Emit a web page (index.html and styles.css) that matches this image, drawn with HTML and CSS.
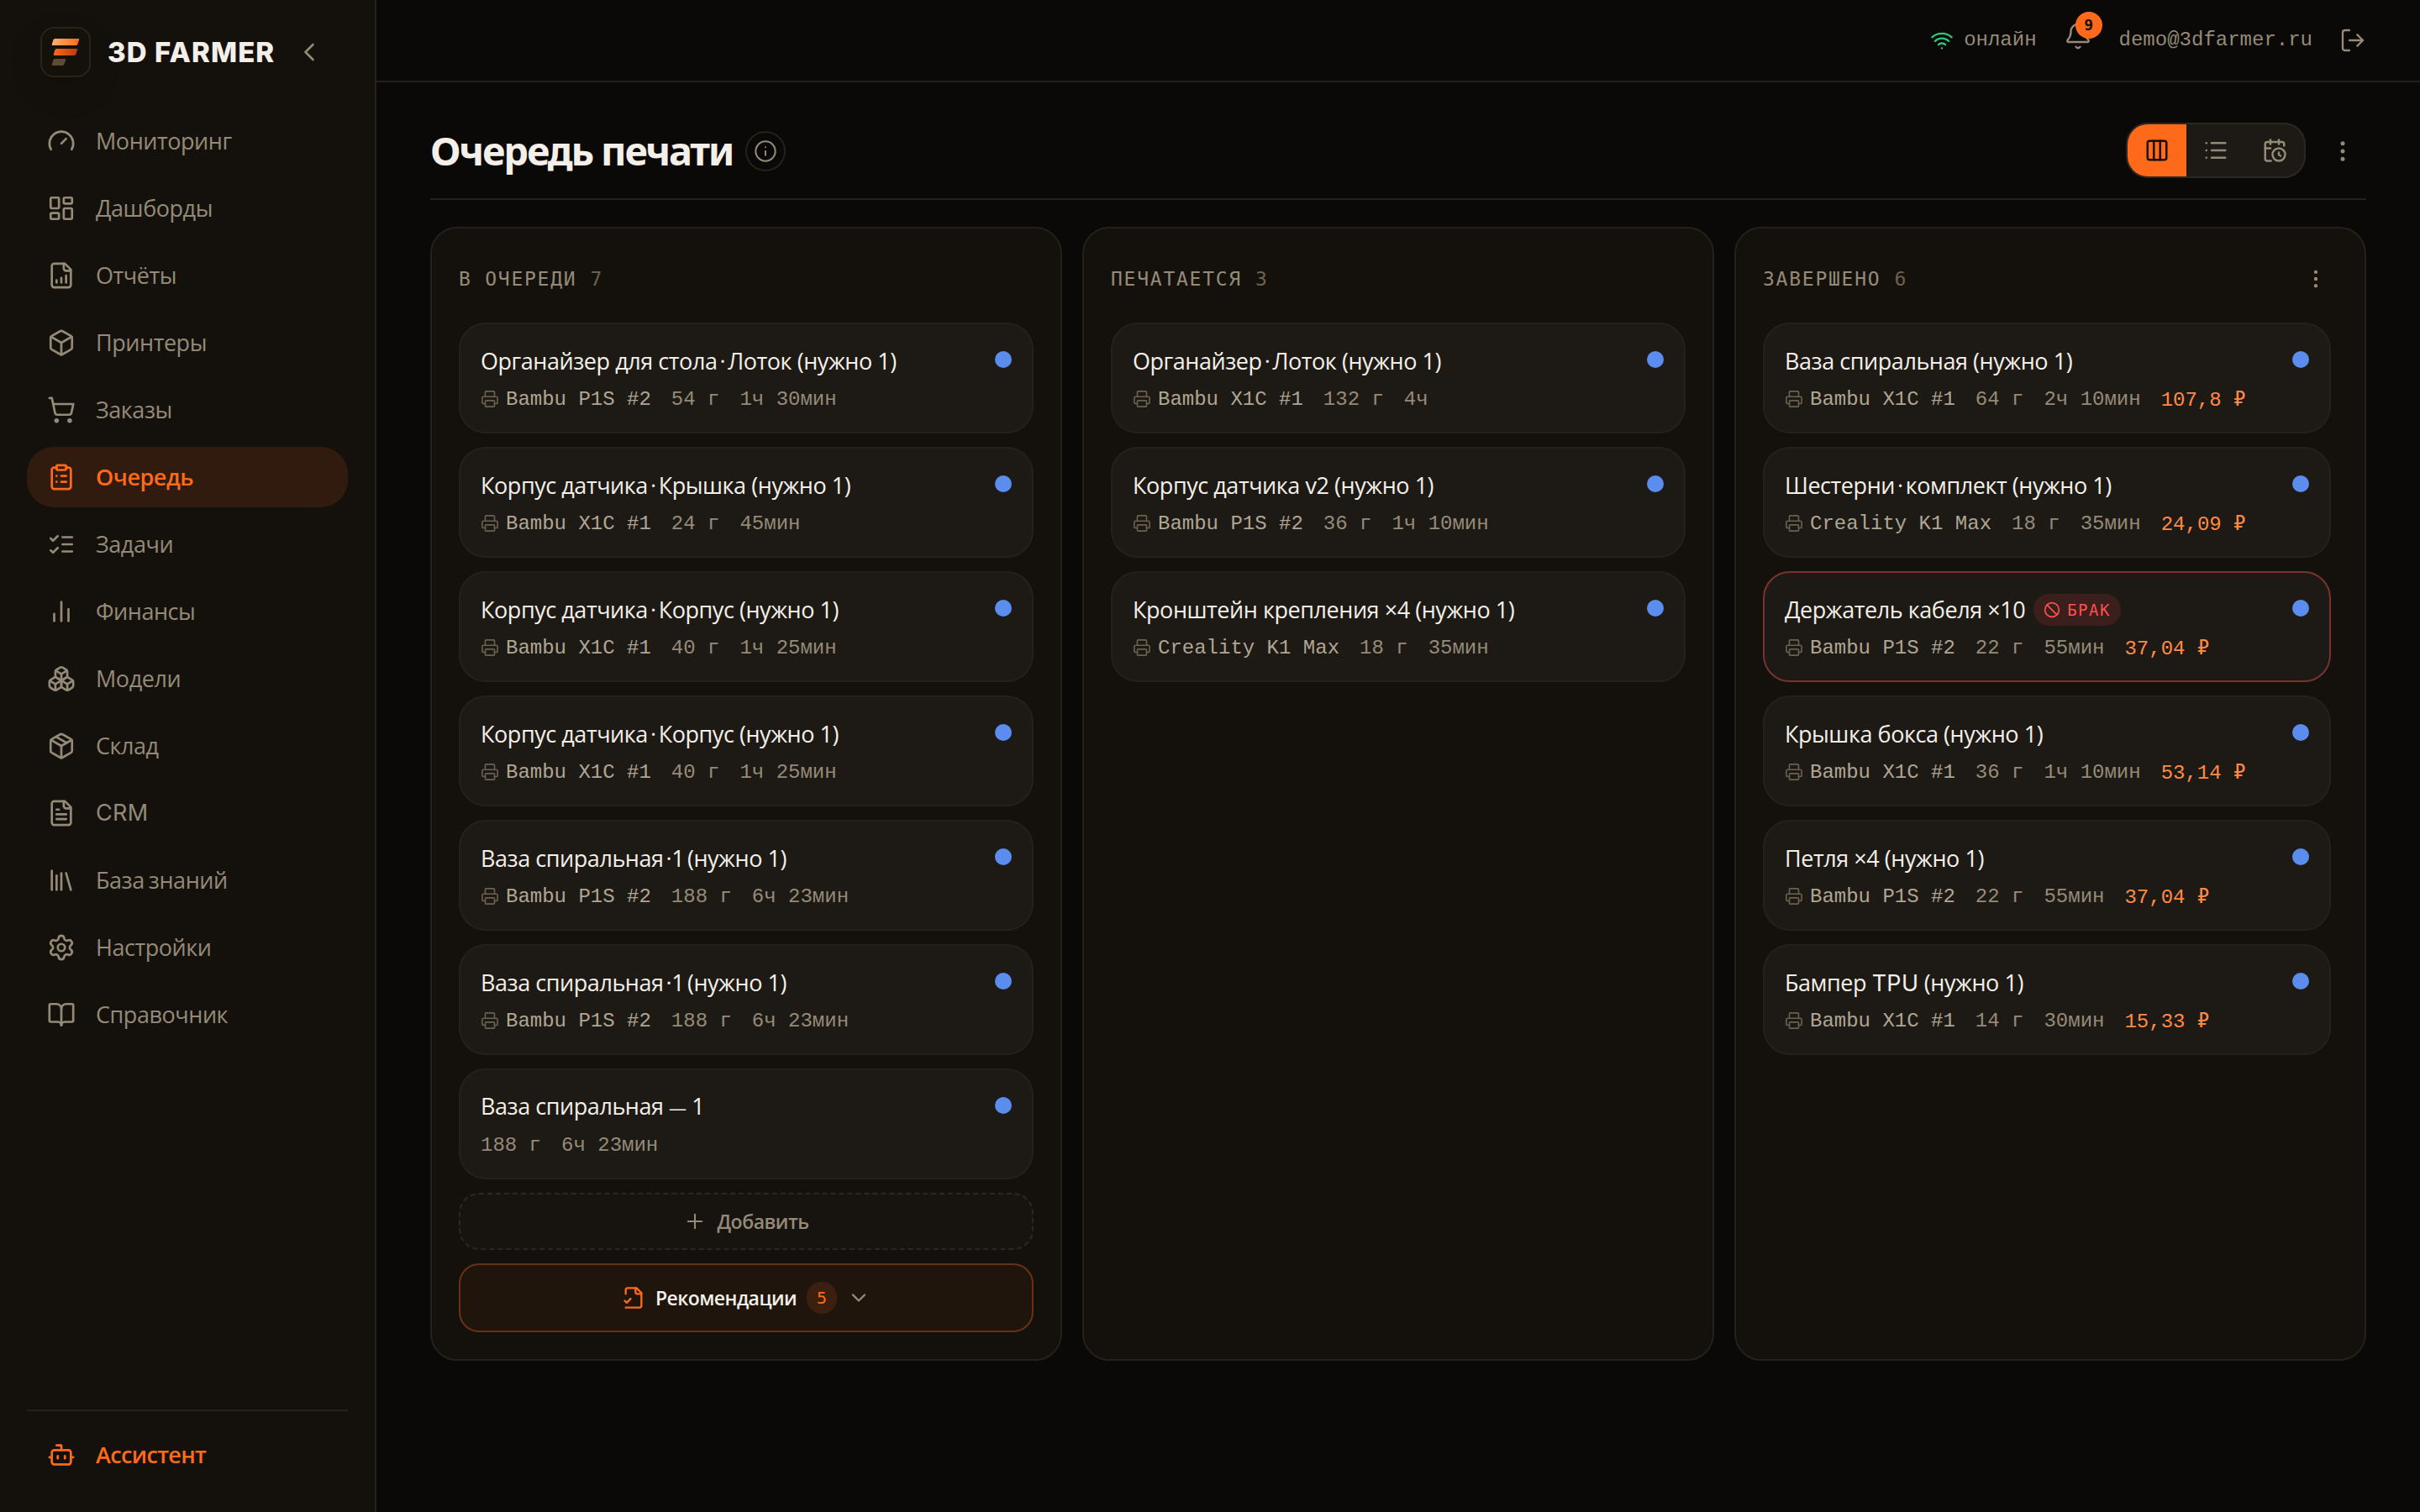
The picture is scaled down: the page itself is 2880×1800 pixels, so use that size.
FILE: index.html
```html
<!DOCTYPE html>
<html lang="ru">
<head>
  <meta charset="UTF-8">
  <title>3D FARMER — Очередь печати</title>
  <link rel="stylesheet" href="styles.css">
</head>
<body>

<!-- иконки -->
<svg class="sprite" xmlns="http://www.w3.org/2000/svg">
  <symbol id="i-left" viewBox="0 0 24 24"><path d="m15 18-6-6 6-6"/></symbol>
  <symbol id="i-down" viewBox="0 0 24 24"><path d="m6 9 6 6 6-6"/></symbol>
  <symbol id="i-gauge" viewBox="0 0 24 24"><path d="m12 14 4-4"/><path d="M3.34 19a10 10 0 1 1 17.32 0"/></symbol>
  <symbol id="i-dash" viewBox="0 0 24 24"><rect width="7" height="9" x="3" y="3" rx="1"/><rect width="7" height="5" x="14" y="3" rx="1"/><rect width="7" height="9" x="14" y="12" rx="1"/><rect width="7" height="5" x="3" y="16" rx="1"/></symbol>
  <symbol id="i-report" viewBox="0 0 24 24"><path d="M15 2H6a2 2 0 0 0-2 2v16a2 2 0 0 0 2 2h12a2 2 0 0 0 2-2V7Z"/><path d="M14 2v4a2 2 0 0 0 2 2h4"/><path d="M8 18v-2"/><path d="M12 18v-4"/><path d="M16 18v-6"/></symbol>
  <symbol id="i-box" viewBox="0 0 24 24"><path d="M21 8a2 2 0 0 0-1-1.73l-7-4a2 2 0 0 0-2 0l-7 4A2 2 0 0 0 3 8v8a2 2 0 0 0 1 1.73l7 4a2 2 0 0 0 2 0l7-4A2 2 0 0 0 21 16Z"/><path d="m3.3 7 8.7 5 8.7-5"/><path d="M12 22V12"/></symbol>
  <symbol id="i-cart" viewBox="0 0 24 24"><circle cx="8" cy="21" r="1"/><circle cx="19" cy="21" r="1"/><path d="M2.05 2.05h2l2.66 12.42a2 2 0 0 0 2 1.58h9.78a2 2 0 0 0 1.95-1.57l1.65-7.43H5.12"/></symbol>
  <symbol id="i-queue" viewBox="0 0 24 24"><rect width="8" height="4" x="8" y="2" rx="1"/><path d="M16 4h2a2 2 0 0 1 2 2v14a2 2 0 0 1-2 2H6a2 2 0 0 1-2-2V6a2 2 0 0 1 2-2h2"/><path d="M12 11h4"/><path d="M12 16h4"/><path d="M8 11h.01"/><path d="M8 16h.01"/></symbol>
  <symbol id="i-tasks" viewBox="0 0 24 24"><path d="m3 17 2 2 4-4"/><path d="m3 7 2 2 4-4"/><path d="M13 6h8"/><path d="M13 12h8"/><path d="M13 18h8"/></symbol>
  <symbol id="i-chart" viewBox="0 0 24 24"><path d="M18 20V10"/><path d="M12 20V4"/><path d="M6 20v-6"/></symbol>
  <symbol id="i-boxes" viewBox="0 0 24 24"><path d="M2.97 12.92A2 2 0 0 0 2 14.63v3.24a2 2 0 0 0 .97 1.71l3 1.8a2 2 0 0 0 2.06 0L12 19v-5.5l-5-3-4.03 2.42Z"/><path d="m7 16.5-4.74-2.85"/><path d="m7 16.5 5-3"/><path d="M7 16.5v5.17"/><path d="M12 13.5V19l3.97 2.38a2 2 0 0 0 2.06 0l3-1.8a2 2 0 0 0 .97-1.71v-3.24a2 2 0 0 0-.97-1.71L17 10.5l-5 3Z"/><path d="m17 16.5-5-3"/><path d="m17 16.5 4.74-2.85"/><path d="M17 16.5v5.17"/><path d="M7.97 4.42A2 2 0 0 0 7 6.13v4.37l5 3 5-3V6.13a2 2 0 0 0-.97-1.71l-3-1.8a2 2 0 0 0-2.06 0l-3 1.8Z"/><path d="M12 8 7.26 5.15"/><path d="m12 8 4.74-2.85"/><path d="M12 13.5V8"/></symbol>
  <symbol id="i-package" viewBox="0 0 24 24"><path d="M11 21.73a2 2 0 0 0 2 0l7-4A2 2 0 0 0 21 16V8a2 2 0 0 0-1-1.73l-7-4a2 2 0 0 0-2 0l-7 4A2 2 0 0 0 3 8v8a2 2 0 0 0 1 1.73z"/><path d="M12 22V12"/><path d="m3.3 7 8.7 5 8.7-5"/><path d="m7.5 4.27 9 5.15"/></symbol>
  <symbol id="i-file" viewBox="0 0 24 24"><path d="M15 2H6a2 2 0 0 0-2 2v16a2 2 0 0 0 2 2h12a2 2 0 0 0 2-2V7Z"/><path d="M14 2v4a2 2 0 0 0 2 2h4"/><path d="M10 9H8"/><path d="M16 13H8"/><path d="M16 17H8"/></symbol>
  <symbol id="i-library" viewBox="0 0 24 24"><path d="m16 6 4 14"/><path d="M12 6v14"/><path d="M8 8v12"/><path d="M4 4v16"/></symbol>
  <symbol id="i-settings" viewBox="0 0 24 24"><path d="M9.671 4.136a2.34 2.34 0 0 1 4.659 0 2.34 2.34 0 0 0 3.319 1.915 2.34 2.34 0 0 1 2.33 4.033 2.34 2.34 0 0 0 0 3.831 2.34 2.34 0 0 1-2.33 4.033 2.34 2.34 0 0 0-3.319 1.915 2.34 2.34 0 0 1-4.659 0 2.34 2.34 0 0 0-3.32-1.915 2.34 2.34 0 0 1-2.33-4.033 2.34 2.34 0 0 0 0-3.831A2.34 2.34 0 0 1 6.35 6.051a2.34 2.34 0 0 0 3.319-1.915"/><circle cx="12" cy="12" r="3"/></symbol>
  <symbol id="i-book" viewBox="0 0 24 24"><path d="M12 7v14"/><path d="M3 18a1 1 0 0 1-1-1V4a1 1 0 0 1 1-1h5a4 4 0 0 1 4 4 4 4 0 0 1 4-4h5a1 1 0 0 1 1 1v13a1 1 0 0 1-1 1h-6a3 3 0 0 0-3 3 3 3 0 0 0-3-3z"/></symbol>
  <symbol id="i-bot" viewBox="0 0 24 24"><path d="M12 8V4H8"/><rect width="16" height="12" x="4" y="8" rx="2"/><path d="M2 14h2"/><path d="M20 14h2"/><path d="M15 13v2"/><path d="M9 13v2"/></symbol>
  <symbol id="i-wifi" viewBox="0 0 24 24"><path d="M12 20h.01"/><path d="M2 8.82a15 15 0 0 1 20 0"/><path d="M5 12.859a10 10 0 0 1 14 0"/><path d="M8.5 16.429a5 5 0 0 1 7 0"/></symbol>
  <symbol id="i-bell" viewBox="0 0 24 24"><path d="M10.268 21a2 2 0 0 0 3.464 0"/><path d="M3.262 15.326A1 1 0 0 0 4 17h16a1 1 0 0 0 .74-1.673C19.41 13.956 18 12.499 18 8A6 6 0 0 0 6 8c0 4.499-1.411 5.956-2.738 7.326"/></symbol>
  <symbol id="i-logout" viewBox="0 0 24 24"><path d="m16 17 5-5-5-5"/><path d="M21 12H9"/><path d="M9 21H5a2 2 0 0 1-2-2V5a2 2 0 0 1 2-2h4"/></symbol>
  <symbol id="i-info" viewBox="0 0 24 24"><circle cx="12" cy="12" r="10"/><path d="M12 16v-4"/><path d="M12 8h.01"/></symbol>
  <symbol id="i-columns" viewBox="0 0 24 24"><rect width="18" height="18" x="3" y="3" rx="2"/><path d="M9 3v18"/><path d="M15 3v18"/></symbol>
  <symbol id="i-list" viewBox="0 0 24 24"><path d="M3 5h.01"/><path d="M3 12h.01"/><path d="M3 19h.01"/><path d="M8 5h13"/><path d="M8 12h13"/><path d="M8 19h13"/></symbol>
  <symbol id="i-calendar" viewBox="0 0 24 24"><path d="M16 14v2.2l1.6 1"/><path d="M16 2v4"/><path d="M21 7.5V6a2 2 0 0 0-2-2H5a2 2 0 0 0-2 2v14a2 2 0 0 0 2 2h3.5"/><path d="M3 10h5"/><path d="M8 2v4"/><circle cx="16" cy="16" r="6"/></symbol>
  <symbol id="i-more" viewBox="0 0 24 24"><circle cx="12" cy="12" r="1"/><circle cx="12" cy="5" r="1"/><circle cx="12" cy="19" r="1"/></symbol>
  <symbol id="i-printer" viewBox="0 0 24 24"><path d="M6 18H4a2 2 0 0 1-2-2v-5a2 2 0 0 1 2-2h16a2 2 0 0 1 2 2v5a2 2 0 0 1-2 2h-2"/><path d="M6 9V3a1 1 0 0 1 1-1h10a1 1 0 0 1 1 1v6"/><rect x="6" y="14" width="12" height="8" rx="1"/></symbol>
  <symbol id="i-ban" viewBox="0 0 24 24"><circle cx="12" cy="12" r="10"/><path d="m4.9 4.9 14.2 14.2"/></symbol>
  <symbol id="i-plus" viewBox="0 0 24 24"><path d="M5 12h14"/><path d="M12 5v14"/></symbol>
  <symbol id="i-filecheck" viewBox="0 0 24 24"><path d="M4 22h14a2 2 0 0 0 2-2V7l-5-5H6a2 2 0 0 0-2 2v4"/><path d="M14 2v4a2 2 0 0 0 2 2h4"/><path d="m3 15 2 2 4-4"/></symbol>
</svg>

<div class="app">
  <aside class="sidebar">
    <div class="brand">
      <div class="logo">
        <svg viewBox="0 0 34 34">
          <defs>
            <linearGradient id="g1" x1="0" y1="0" x2="1" y2="0"><stop offset="0" stop-color="#ffb070"/><stop offset="1" stop-color="#ff6a1a"/></linearGradient>
            <linearGradient id="g2" x1="0" y1="0" x2="1" y2="0"><stop offset="0" stop-color="#ff6a1a"/><stop offset="1" stop-color="#b83c08"/></linearGradient>
          </defs>
          <path fill="url(#g1)" d="M4.4 1H32.4Q33.6 1 33.2 2.2L31.4 7.4Q30.8 9 29.2 9H1.6Q.4 9 .8 7.8L2.4 2.6Q3 1 4.4 1Z"/>
          <path fill="url(#g2)" d="M6.4 13H30.4Q31.6 13 31.2 14.2L29.4 19.4Q28.8 21 27.2 21H3.6Q2.4 21 2.8 19.8L4.4 14.6Q5 13 6.4 13Z"/>
          <path fill="#5f4a36" d="M4.4 25H16.4Q17.6 25 17.2 26.2L15.4 31.4Q14.8 33 13.2 33H1.6Q.4 33 .8 31.8L2.4 26.6Q3 25 4.4 25Z"/>
        </svg>
      </div>
      <span class="brand-name">3D FARMER</span>
      <svg class="icon collapse"><use href="#i-left"/></svg>
    </div>
    <nav class="nav">
      <a class="nav-item"><svg class="icon"><use href="#i-gauge"/></svg>Мониторинг</a>
      <a class="nav-item"><svg class="icon"><use href="#i-dash"/></svg>Дашборды</a>
      <a class="nav-item"><svg class="icon"><use href="#i-report"/></svg>Отчёты</a>
      <a class="nav-item"><svg class="icon"><use href="#i-box"/></svg>Принтеры</a>
      <a class="nav-item"><svg class="icon"><use href="#i-cart"/></svg>Заказы</a>
      <a class="nav-item active"><svg class="icon"><use href="#i-queue"/></svg>Очередь</a>
      <a class="nav-item"><svg class="icon"><use href="#i-tasks"/></svg>Задачи</a>
      <a class="nav-item"><svg class="icon"><use href="#i-chart"/></svg>Финансы</a>
      <a class="nav-item"><svg class="icon"><use href="#i-boxes"/></svg>Модели</a>
      <a class="nav-item"><svg class="icon"><use href="#i-package"/></svg>Склад</a>
      <a class="nav-item"><svg class="icon"><use href="#i-file"/></svg><span class="latin">CRM</span></a>
      <a class="nav-item"><svg class="icon"><use href="#i-library"/></svg>База знаний</a>
      <a class="nav-item"><svg class="icon"><use href="#i-settings"/></svg>Настройки</a>
      <a class="nav-item"><svg class="icon"><use href="#i-book"/></svg>Справочник</a>
    </nav>
    <div class="sidebar-bottom">
      <a class="nav-item assistant"><svg class="icon"><use href="#i-bot"/></svg>Ассистент</a>
    </div>
  </aside>

  <div class="content">
    <header class="topbar">
      <span class="status"><svg class="icon"><use href="#i-wifi"/></svg>онлайн</span>
      <span class="bell"><svg class="icon"><use href="#i-bell"/></svg><span class="bell-count">9</span></span>
      <span>demo@3dfarmer.ru</span>
      <svg class="icon logout"><use href="#i-logout"/></svg>
    </header>

    <main class="main">
      <div class="page-head">
        <h1>Очередь печати</h1>
        <button class="info"><svg class="icon"><use href="#i-info"/></svg></button>
        <div class="views">
          <button class="view active"><svg class="icon"><use href="#i-columns"/></svg></button>
          <button class="view"><svg class="icon"><use href="#i-list"/></svg></button>
          <button class="view"><svg class="icon"><use href="#i-calendar"/></svg></button>
        </div>
        <button class="more"><svg class="icon"><use href="#i-more"/></svg></button>
      </div>

      <div class="board">
        <!-- В очереди -->
        <section class="column">
          <div class="column-head"><span>В ОЧЕРЕДИ</span><span class="count">7</span></div>
          <div class="cards">
            <div class="card">
              <div class="card-top"><span class="title">Органайзер для стола<span class="sep"> · </span>Лоток (нужно 1)</span><i class="dot"></i></div>
              <div class="meta"><span class="printer"><svg class="icon"><use href="#i-printer"/></svg>Bambu P1S #2</span><span>54 г</span><span>1ч 30мин</span></div>
            </div>
            <div class="card">
              <div class="card-top"><span class="title">Корпус датчика<span class="sep"> · </span>Крышка (нужно 1)</span><i class="dot"></i></div>
              <div class="meta"><span class="printer"><svg class="icon"><use href="#i-printer"/></svg>Bambu X1C #1</span><span>24 г</span><span>45мин</span></div>
            </div>
            <div class="card">
              <div class="card-top"><span class="title">Корпус датчика<span class="sep"> · </span>Корпус (нужно 1)</span><i class="dot"></i></div>
              <div class="meta"><span class="printer"><svg class="icon"><use href="#i-printer"/></svg>Bambu X1C #1</span><span>40 г</span><span>1ч 25мин</span></div>
            </div>
            <div class="card">
              <div class="card-top"><span class="title">Корпус датчика<span class="sep"> · </span>Корпус (нужно 1)</span><i class="dot"></i></div>
              <div class="meta"><span class="printer"><svg class="icon"><use href="#i-printer"/></svg>Bambu X1C #1</span><span>40 г</span><span>1ч 25мин</span></div>
            </div>
            <div class="card">
              <div class="card-top"><span class="title">Ваза спиральная<span class="sep"> · </span><span class="one">1</span> (нужно 1)</span><i class="dot"></i></div>
              <div class="meta"><span class="printer"><svg class="icon"><use href="#i-printer"/></svg>Bambu P1S #2</span><span>188 г</span><span>6ч 23мин</span></div>
            </div>
            <div class="card">
              <div class="card-top"><span class="title">Ваза спиральная<span class="sep"> · </span><span class="one">1</span> (нужно 1)</span><i class="dot"></i></div>
              <div class="meta"><span class="printer"><svg class="icon"><use href="#i-printer"/></svg>Bambu P1S #2</span><span>188 г</span><span>6ч 23мин</span></div>
            </div>
            <div class="card">
              <div class="card-top"><span class="title">Ваза спиральная <span class="dash">—</span> 1</span><i class="dot"></i></div>
              <div class="meta"><span>188 г</span><span>6ч 23мин</span></div>
            </div>
            <button class="add"><svg class="icon"><use href="#i-plus"/></svg>Добавить</button>
            <button class="recs"><svg class="icon"><use href="#i-filecheck"/></svg>Рекомендации<span class="recs-count">5</span><svg class="icon chevron"><use href="#i-down"/></svg></button>
          </div>
        </section>

        <!-- Печатается -->
        <section class="column">
          <div class="column-head"><span>ПЕЧАТАЕТСЯ</span><span class="count">3</span></div>
          <div class="cards">
            <div class="card">
              <div class="card-top"><span class="title">Органайзер<span class="sep"> · </span>Лоток (нужно 1)</span><i class="dot"></i></div>
              <div class="meta"><span class="printer"><svg class="icon"><use href="#i-printer"/></svg>Bambu X1C #1</span><span>132 г</span><span>4ч</span></div>
            </div>
            <div class="card">
              <div class="card-top"><span class="title">Корпус датчика v2 (нужно 1)</span><i class="dot"></i></div>
              <div class="meta"><span class="printer"><svg class="icon"><use href="#i-printer"/></svg>Bambu P1S #2</span><span>36 г</span><span>1ч 10мин</span></div>
            </div>
            <div class="card">
              <div class="card-top"><span class="title">Кронштейн крепления ×4 (нужно 1)</span><i class="dot"></i></div>
              <div class="meta"><span class="printer"><svg class="icon"><use href="#i-printer"/></svg>Creality K1 Max</span><span>18 г</span><span>35мин</span></div>
            </div>
          </div>
        </section>

        <!-- Завершено -->
        <section class="column">
          <div class="column-head"><span>ЗАВЕРШЕНО</span><span class="count">6</span><button class="more"><svg class="icon"><use href="#i-more"/></svg></button></div>
          <div class="cards scroll">
            <div class="card">
              <div class="card-top"><span class="title">Ваза спиральная (нужно 1)</span><i class="dot"></i></div>
              <div class="meta"><span class="printer"><svg class="icon"><use href="#i-printer"/></svg>Bambu X1C #1</span><span>64 г</span><span>2ч 10мин</span><span class="price">107,8 ₽</span></div>
            </div>
            <div class="card">
              <div class="card-top"><span class="title">Шестерни<span class="sep"> · </span>комплект (нужно 1)</span><i class="dot"></i></div>
              <div class="meta"><span class="printer"><svg class="icon"><use href="#i-printer"/></svg>Creality K1 Max</span><span>18 г</span><span>35мин</span><span class="price">24,09 ₽</span></div>
            </div>
            <div class="card defect">
              <div class="card-top"><span class="title">Держатель кабеля ×10</span><span class="badge"><svg class="icon"><use href="#i-ban"/></svg>БРАК</span><i class="dot"></i></div>
              <div class="meta"><span class="printer"><svg class="icon"><use href="#i-printer"/></svg>Bambu P1S #2</span><span>22 г</span><span>55мин</span><span class="price">37,04 ₽</span></div>
            </div>
            <div class="card">
              <div class="card-top"><span class="title">Крышка бокса (нужно 1)</span><i class="dot"></i></div>
              <div class="meta"><span class="printer"><svg class="icon"><use href="#i-printer"/></svg>Bambu X1C #1</span><span>36 г</span><span>1ч 10мин</span><span class="price">53,14 ₽</span></div>
            </div>
            <div class="card">
              <div class="card-top"><span class="title">Петля ×4 (нужно 1)</span><i class="dot"></i></div>
              <div class="meta"><span class="printer"><svg class="icon"><use href="#i-printer"/></svg>Bambu P1S #2</span><span>22 г</span><span>55мин</span><span class="price">37,04 ₽</span></div>
            </div>
            <div class="card">
              <div class="card-top"><span class="title">Бампер <span class="latin">TPU</span> (нужно 1)</span><i class="dot"></i></div>
              <div class="meta"><span class="printer"><svg class="icon"><use href="#i-printer"/></svg>Bambu X1C #1</span><span>14 г</span><span>30мин</span><span class="price">15,33 ₽</span></div>
            </div>
          </div>
        </section>
      </div>
    </main>
  </div>
</div>

</body>
</html>
```
FILE: styles.css
```css
* {
  box-sizing: border-box;
}
body {
  margin: 0;
  background: #0a0907;
  color: #f4efe8;
  font-family: "Open Sans", "Noto Sans", sans-serif;
  font-size: 27px;
}
button {
  padding: 0;
  border: 0;
  background: none;
  color: inherit;
  font: inherit;
}
.sprite {
  display: none;
}
.icon {
  flex: none;
  width: 28px;
  height: 28px;
  fill: none;
  stroke: currentColor;
  stroke-width: 1.75;
  stroke-linecap: round;
  stroke-linejoin: round;
}
.latin {
  font-family: Inter, sans-serif;
  letter-spacing: 0.3px;
}
.app {
  display: flex;
  height: 1800px;
}

/* sidebar */
.sidebar {
  display: flex;
  flex-direction: column;
  flex: none;
  width: 448px;
  padding: 32px;
  background: #14110c;
  border-right: 2px solid #25211c;
}
.brand {
  display: flex;
  align-items: center;
  padding: 0 28px 0 16px;
  margin-bottom: 40px;
}
.logo {
  display: flex;
  align-items: center;
  justify-content: center;
  width: 60px;
  height: 60px;
  border: 2px solid #2a2318;
  border-radius: 16px;
  background: #14110b;
  box-shadow: 0 16px 40px rgba(0, 0, 0, 0.12);
}
.logo svg {
  width: 34px;
  height: 34px;
}
.brand-name {
  margin-left: 20px;
  font-family: Inter, sans-serif;
  font-size: 33px;
  font-weight: 800;
  letter-spacing: 1.1px;
  line-height: 40px;
  white-space: nowrap;
}
.collapse {
  width: 36px;
  height: 36px;
  margin-left: auto;
  color: #958a78;
}
.nav {
  display: flex;
  flex-direction: column;
  gap: 8px;
}
.nav-item {
  display: flex;
  align-items: center;
  gap: 24px;
  height: 72px;
  padding: 0 24px;
  border-radius: 32px;
  color: #958a78;
  letter-spacing: -0.45px;
  word-spacing: -1.5px;
  line-height: 36px;
}
.nav-item .icon {
  width: 34px;
  height: 34px;
  stroke-width: 1.9;
}
.nav-item.active {
  background: #311b0f;
  color: #ff6a1a;
  font-weight: 600;
}
.assistant {
  color: #ff6a1a;
  font-weight: 600;
  letter-spacing: -0.65px;
}
.sidebar-bottom {
  margin-top: auto;
  padding-top: 16px;
  border-top: 2px solid #25211c;
}

/* top bar */
.content {
  flex: 1;
  min-width: 0;
}
.topbar {
  display: flex;
  align-items: center;
  justify-content: flex-end;
  gap: 32px;
  height: 98px;
  padding-right: 64px;
  border-bottom: 2px solid #25201a;
  color: #958a78;
  font-family: "Liberation Mono", monospace;
  font-size: 24px;
  line-height: 30px;
}
.status {
  display: flex;
  align-items: center;
  gap: 12px;
}
.status .icon {
  color: #2fc77c;
  stroke-width: 2;
}
.bell {
  position: relative;
  display: flex;
  margin-bottom: 10px;
}
.bell .icon {
  width: 34px;
  height: 34px;
}
.bell-count {
  position: absolute;
  top: -12px;
  right: -12px;
  width: 32px;
  height: 32px;
  border-radius: 50%;
  background: #ff6a1a;
  color: #14110c;
  font-family: "DejaVu Sans Mono", monospace;
  font-size: 18px;
  font-weight: 700;
  line-height: 32px;
  text-align: center;
}
.logout {
  width: 32px;
  height: 32px;
}

/* page */
.main {
  padding: 48px 64px 0;
}
.page-head {
  display: flex;
  align-items: center;
  padding-bottom: 24px;
  margin-bottom: 32px;
  border-bottom: 2px solid #25201a;
}
h1 {
  margin: 0;
  font-family: "Noto Sans", sans-serif;
  font-size: 47px;
  font-weight: 700;
  letter-spacing: -2.2px;
  line-height: 60px;
  white-space: nowrap;
}
.info {
  display: flex;
  align-items: center;
  justify-content: center;
  width: 48px;
  height: 48px;
  margin: 2px 0 0 15px;
  border: 2px solid #25201a;
  border-radius: 50%;
  color: #958a78;
}
.views {
  display: flex;
  margin-left: auto;
  overflow: hidden;
  border: 2px solid #2d2721;
  border-radius: 26px;
  background: #1d1a15;
}
.view {
  display: flex;
  align-items: center;
  justify-content: center;
  width: 70px;
  height: 62px;
  color: #958a78;
}
.view .icon {
  width: 30px;
  height: 30px;
  stroke-width: 2;
}
.view.active {
  background: #ff6a1a;
  color: #140f0a;
}
.more {
  display: flex;
  align-items: center;
  justify-content: center;
  width: 56px;
  height: 56px;
  color: #958a78;
}
.more .icon {
  fill: currentColor;
}
.page-head .more {
  margin: 2px 0 0 16px;
}
.page-head .more .icon {
  width: 32px;
  height: 32px;
}

/* board */
.board {
  display: grid;
  grid-template-columns: repeat(3, 1fr);
  gap: 24px;
}
.column {
  padding: 32px;
  border: 2px solid #25201a;
  border-radius: 32px;
  background: #14110c;
}
.column-head {
  display: flex;
  align-items: center;
  gap: 16px;
  height: 56px;
  margin-bottom: 24px;
  color: #958a78;
  font-family: "DejaVu Sans Mono", monospace;
  font-size: 23px;
}
.column-head span:first-child {
  letter-spacing: 1.75px;
}
.column-head .count {
  color: #6b6150;
}
.column-head .more {
  margin: 0 -2px 0 auto;
}
.cards {
  display: flex;
  flex-direction: column;
  gap: 16px;
}
.cards.scroll {
  padding-right: 8px;
}
.card {
  height: 132px;
  padding: 24px;
  border: 2px solid #24201b;
  border-radius: 32px;
  background: #1d1a15;
}
.card.defect {
  border-color: #7a3230;
}
.card-top {
  display: flex;
  align-items: center;
  height: 40px;
  margin-bottom: 10px;
}
.title {
  line-height: 40px;
  letter-spacing: -0.45px;
  word-spacing: 0;
  white-space: nowrap;
}
.sep {
  word-spacing: -3.5px;
}
.one {
  margin: 0 -3px;
}
.dash {
  font-size: 21px;
}
.dot {
  align-self: flex-start;
  width: 20px;
  height: 20px;
  margin: 8px 0 0 auto;
  border-radius: 50%;
  background: #5b8def;
}
.badge {
  display: flex;
  align-items: center;
  gap: 8px;
  height: 38px;
  margin-left: 10px;
  padding: 0 12px;
  border-radius: 19px;
  background: #3a1f1c;
  color: #ff5050;
  font-family: "DejaVu Sans Mono", monospace;
  font-size: 19px;
  letter-spacing: 1.5px;
}
.badge .icon {
  width: 20px;
  height: 20px;
  stroke-width: 2;
}
.meta {
  display: flex;
  align-items: center;
  gap: 24px;
  height: 30px;
  color: #958a78;
  font-family: "Liberation Mono", monospace;
  font-size: 24px;
  white-space: nowrap;
}
.printer {
  display: flex;
  align-items: center;
  gap: 8px;
  color: #b0a593;
}
.printer .icon {
  width: 22px;
  height: 22px;
  color: #6b6150;
}
.price {
  color: #ff8a45;
}
.add,
.recs {
  display: flex;
  align-items: center;
  justify-content: center;
  gap: 12px;
  border-radius: 24px;
  font-size: 23px;
  font-weight: 600;
}
.add {
  height: 68px;
  border: 2px dashed #2d2721;
  background: #171410;
  color: #958a78;
  letter-spacing: -0.5px;
}
.recs {
  height: 82px;
  border: 2px solid #693013;
  background: #20150d;
  letter-spacing: -0.55px;
}
.recs .icon {
  color: #ff6a1a;
  stroke-width: 2;
}
.recs .chevron {
  color: #958a78;
}
.recs-count {
  width: 36px;
  height: 38px;
  border-radius: 19px;
  background: #3d1f10;
  color: #ff6a1a;
  font-family: "DejaVu Sans Mono", monospace;
  font-size: 20px;
  font-weight: 400;
  letter-spacing: 0;
  line-height: 38px;
  text-align: center;
}
```
